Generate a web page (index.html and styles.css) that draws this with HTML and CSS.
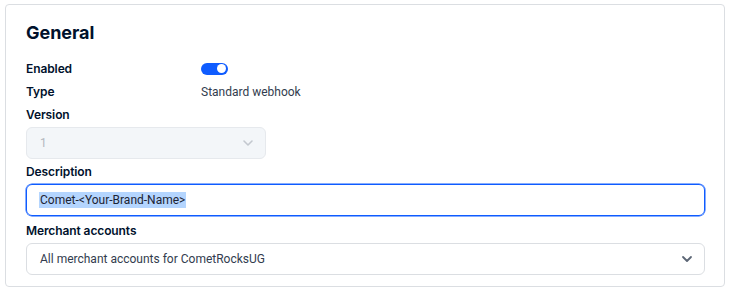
FILE: index.html
```html
<!DOCTYPE html>
<html lang="en">
<head>
    <meta charset="UTF-8">
    <meta name="viewport" content="width=device-width, initial-scale=1.0">
    <title>General</title>
    <link rel="stylesheet" href="styles.css">
</head>
<body>
    <section class="card">
        <h2 class="card-title">General</h2>

        <div class="row">
            <span class="label">Enabled</span>
            <span class="toggle"><span class="knob"></span></span>
        </div>
        <div class="row">
            <span class="label">Type</span>
            <span class="value">Standard webhook</span>
        </div>

        <div class="field">
            <span class="label">Version</span>
            <div class="select select-small disabled">
                <span>1</span>
                <svg class="chevron" width="12" height="8" viewBox="0 0 12 8"><path d="M2 2l4 4 4-4" fill="none" stroke="currentColor" stroke-width="1.6" stroke-linecap="round" stroke-linejoin="round"/></svg>
            </div>
        </div>

        <div class="field">
            <span class="label">Description</span>
            <div class="input focused">
                <span class="selected">Comet-&lt;Your-Brand-Name&gt;</span>
            </div>
        </div>

        <div class="field">
            <span class="label">Merchant accounts</span>
            <div class="select">
                <span>All merchant accounts for CometRocksUG</span>
                <svg class="chevron dark" width="12" height="8" viewBox="0 0 12 8"><path d="M2 2l4 4 4-4" fill="none" stroke="currentColor" stroke-width="1.8" stroke-linecap="round" stroke-linejoin="round"/></svg>
            </div>
        </div>
    </section>
</body>
</html>
```

FILE: styles.css
```css
body{
    margin: 0;
    padding: 4px 6px 0 5px;
    background: #ffffff;
    font-family: Inter, "Noto Sans", Arial, sans-serif;
    color: #00112c;
}
.card{
    border: 1px solid #dbdee2;
    border-radius: 4px;
    padding: 14px 19px 11px 20px;
}
.card-title{
    margin: 0 0 10px 0;
    font-size: 18px;
    line-height: 28px;
    font-weight: 700;
    letter-spacing: -0.05px;
}
.row{
    display: flex;
    align-items: center;
    height: 23px;
}
.row .label{
    width: 175px;
}
.label{
    font-size: 12px;
    font-weight: 600;
    line-height: 18px;
    letter-spacing: -0.1px;
}
.value{
    font-family: Roboto, Arial, sans-serif;
    font-size: 12px;
    color: #323c4e;
}
.toggle{
    width: 27px;
    height: 12px;
    border-radius: 6px;
    background: #0f5cff;
    display: flex;
    align-items: center;
    justify-content: flex-end;
    padding-right: 2px;
    box-sizing: border-box;
}
.knob{
    width: 9px;
    height: 9px;
    border-radius: 50%;
    background: #ffffff;
}
.field{
    display: flex;
    flex-direction: column;
    gap: 3px;
    margin-top: 4px;
}
.row + .field{
    margin-top: 3px;
}
.field:last-child{
    margin-top: 6px;
}
.select, .input{
    height: 32px;
    box-sizing: border-box;
    border: 1px solid #dbdee2;
    border-radius: 6px;
    display: flex;
    align-items: center;
    justify-content: space-between;
    padding: 0 11px 0 13px;
    font-family: Roboto, Arial, sans-serif;
    font-size: 12px;
    color: #323c4e;
}
.select-small{
    width: 240px;
}
.disabled{
    background: #f3f6f9;
    border-color: #e6e9ed;
    color: #b3b8c0;
}
.chevron{
    color: #c3c8cf;
}
.chevron.dark{
    color: #5c6675;
}
.focused{
    border-color: #0f5cff;
    box-shadow: 0 0 0 0.5px #0f5cff;
    padding-left: 12px;
}
.selected{
    background: #b4d5fe;
    padding: 1px 1px 1px 1px;
    color: #1d2433;
    line-height: 14px;
}
```
